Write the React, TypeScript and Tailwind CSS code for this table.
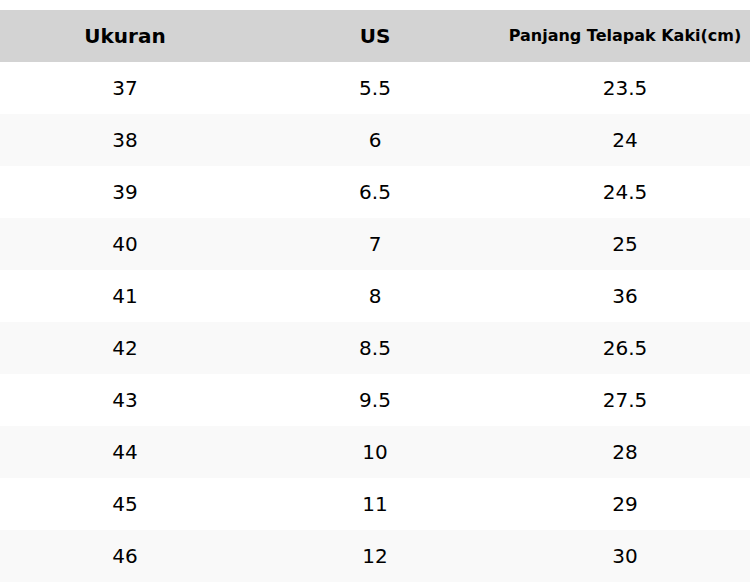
const rows = [
  ["37", "5.5", "23.5"],
  ["38", "6", "24"],
  ["39", "6.5", "24.5"],
  ["40", "7", "25"],
  ["41", "8", "36"],
  ["42", "8.5", "26.5"],
  ["43", "9.5", "27.5"],
  ["44", "10", "28"],
  ["45", "11", "29"],
  ["46", "12", "30"],
];

export default function App() {
  return (
    <div className="w-[750px] bg-white pt-[10px] font-['DejaVu_Sans',sans-serif] text-black">
      <table className="w-full table-fixed border-collapse">
        <thead>
          <tr className="h-[52px] bg-[#d3d3d3]">
            <th className="w-1/3 text-center text-[20px] font-bold">Ukuran</th>
            <th className="w-1/3 text-center text-[20px] font-bold">US</th>
            <th className="w-1/3 whitespace-nowrap text-center text-[16px] font-bold">Panjang Telapak Kaki(cm)</th>
          </tr>
        </thead>
        <tbody>
          {rows.map((r, i) => (
            <tr key={i} className={i % 2 === 1 ? "h-[52px] bg-[#f9f9f9]" : "h-[52px] bg-white"}>
              {r.map((c, j) => (
                <td key={j} className="text-center text-[20px]">{c}</td>
              ))}
            </tr>
          ))}
        </tbody>
      </table>
    </div>
  );
}
